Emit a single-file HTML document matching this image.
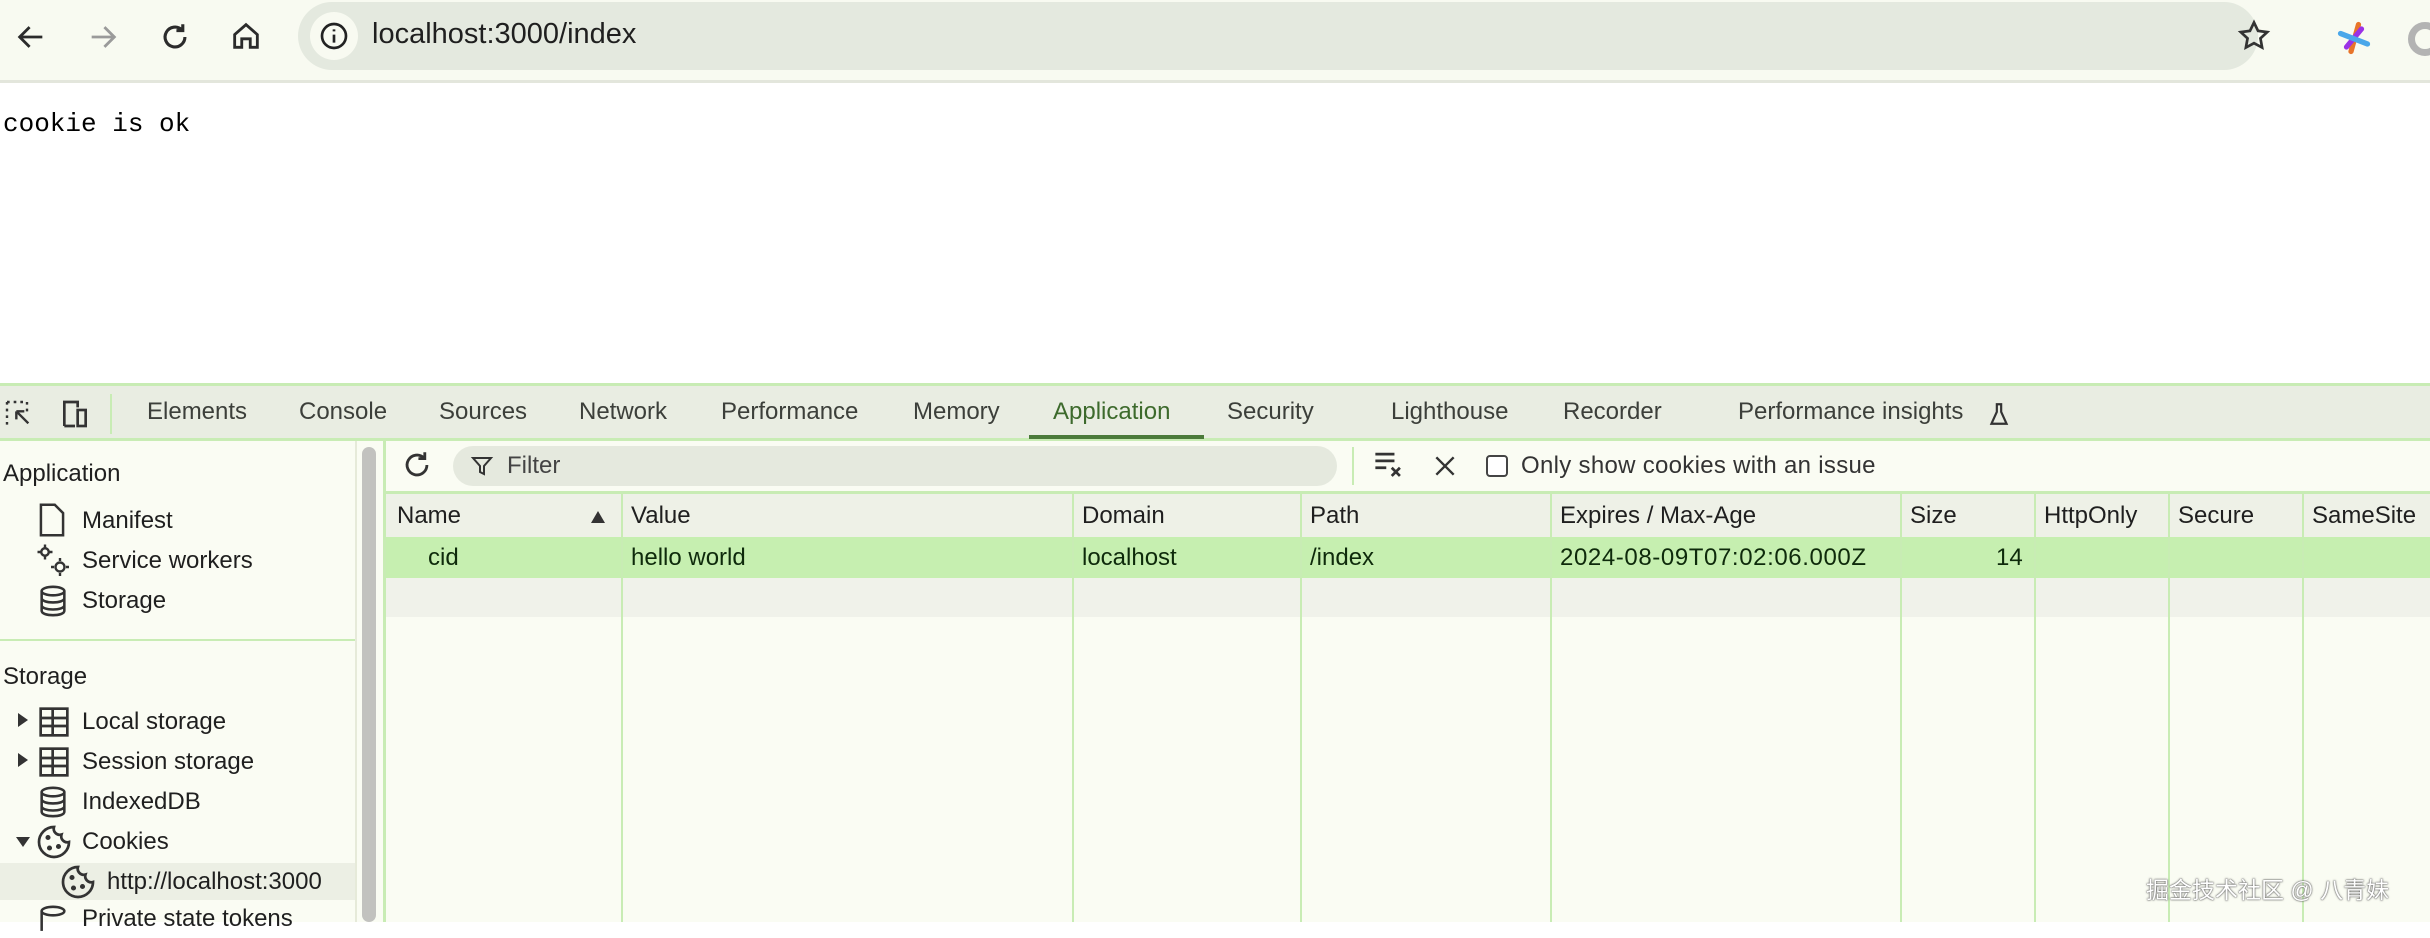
<!DOCTYPE html>
<html><head><meta charset="utf-8"><style>
*{margin:0;padding:0;box-sizing:border-box}
body{width:2430px;height:922px;overflow:hidden;background:#fff;font-family:"Liberation Sans","Noto Sans CJK SC",sans-serif;position:relative;color:#1f1f1f}
.a{position:absolute;white-space:nowrap}
.top{position:absolute;left:0;top:0;width:2430px;height:83px;background:#f8faf1;border-bottom:3px solid #e3e6dc}
.pill{position:absolute;left:298px;top:2px;width:1960px;height:68px;border-radius:34px;background:#e4e9df}
.tabs{position:absolute;left:0;top:383px;width:2430px;height:58px;background:#e9ede2;border-top:3px solid #c8ecb4;border-bottom:3px solid #c8ecb4}
.tab{position:absolute;top:12px;font-size:24px;color:#3c3f3a}
.dev{position:absolute;left:0;top:441px;width:2430px;height:481px;background:#fafcf3}
.side{font-size:24px;color:#1f1f1f}
.th{font-size:24px;color:#1f1f1f;top:502px}
.td{font-size:24px;color:#0e2a0b;top:544px}
.col{position:absolute;top:494px;width:2px;height:428px;background:#c8ecb4}
</style></head><body>
<div class="top">
 <svg class="a" style="left:14px;top:20px" width="34" height="34" viewBox="0 0 24 24" fill="none" stroke="#2b2b2b" stroke-width="2"><path d="M20 12H5M11 5l-7 7 7 7"/></svg>
 <svg class="a" style="left:86px;top:20px" width="34" height="34" viewBox="0 0 24 24" fill="none" stroke="#9a9a9a" stroke-width="2"><path d="M4 12h15M13 5l7 7-7 7"/></svg>
 <svg class="a" style="left:158px;top:20px" width="34" height="34" viewBox="0 0 24 24" fill="none" stroke="#2b2b2b" stroke-width="2.2"><path d="M19 12a7 7 0 1 1-2.1-5M17.5 3v4.5H13"/></svg>
 <svg class="a" style="left:229px;top:19px" width="34" height="34" viewBox="0 0 24 24" fill="none" stroke="#2b2b2b" stroke-width="2"><path d="M4 11l8-7 8 7v9h-5v-6H9v6H4z"/></svg>
 <div class="pill"></div>
 <div class="a" style="left:310px;top:12px;width:48px;height:48px;border-radius:24px;background:#f8faf1"></div>
 <svg class="a" style="left:318px;top:20px" width="32" height="32" viewBox="0 0 24 24" fill="none" stroke="#222" stroke-width="2"><circle cx="12" cy="12" r="9"/><path d="M12 11v6M12 7v1.5"/></svg>
 <div class="a" style="left:372px;top:18px;font-size:29px;color:#1f1f1f">localhost:3000/index</div>
 <svg class="a" style="left:2236px;top:18px" width="36" height="36" viewBox="0 0 24 24" fill="none" stroke="#333" stroke-width="1.8"><path d="M12 3l2.7 5.6 6.1.8-4.5 4.2 1.1 6.1L12 16.8l-5.4 2.9 1.1-6.1-4.5-4.2 6.1-.8z"/></svg>
 <svg class="a" style="left:2336px;top:20px" width="36" height="36" viewBox="0 0 24 24" stroke-width="3.5" stroke-linecap="round"><path d="M15 3L10 21" stroke="#e8742a"/><path d="M17 6L7 18" stroke="#9b32e6"/><path d="M3 9l18 7" stroke="#4aa7ea"/></svg>
 <div class="a" style="left:2408px;top:22px;width:34px;height:34px;border-radius:50%;border:7px solid #b3b3b3"></div>
</div>
<div class="a" style="left:3px;top:109px;font-family:'Liberation Mono',monospace;font-size:26px;color:#000">cookie is ok</div>

<div class="tabs">
 <svg class="a" style="left:3px;top:12px" width="32" height="32" viewBox="0 0 24 24" fill="none" stroke="#333" stroke-width="1.8"><path d="M3 3h2M8 3h2M13 3h2M3 3v2M3 8v2M3 13v2M3 18v2M18 3v2M18 8v2" stroke-dasharray="2 1.5"/><path d="M10 10l9 9M10 10v6M10 10h6"/></svg>
 <svg class="a" style="left:58px;top:12px" width="34" height="32" viewBox="0 0 24 24" fill="none" stroke="#333" stroke-width="2"><path d="M4 21V3h10v4M4 21h8"/><rect x="14" y="9" width="6" height="12"/></svg>
 <div class="a" style="left:110px;top:8px;width:2px;height:40px;background:#c8ecb4"></div>
 <div class="tab" style="left:147px">Elements</div>
 <div class="tab" style="left:299px">Console</div>
 <div class="tab" style="left:439px">Sources</div>
 <div class="tab" style="left:579px">Network</div>
 <div class="tab" style="left:721px">Performance</div>
 <div class="tab" style="left:913px">Memory</div>
 <div class="tab" style="left:1053px;color:#3d6a2c">Application</div>
 <div class="a" style="left:1029px;top:49px;width:175px;height:4px;background:#4b7a3a"></div>
 <div class="tab" style="left:1227px">Security</div>
 <div class="tab" style="left:1391px">Lighthouse</div>
 <div class="tab" style="left:1563px">Recorder</div>
 <div class="tab" style="left:1738px">Performance insights</div>
 <svg class="a" style="left:1986px;top:13px" width="26" height="30" viewBox="0 0 24 24" fill="none" stroke="#333" stroke-width="2"><path d="M9 3h6M10 3v7l-5 11h14l-5-11V3"/></svg>
</div>

<div class="dev">
 <div class="a" style="left:355px;top:0;width:2px;height:481px;background:#e6ead9"></div>
 <div class="a" style="left:362px;top:6px;width:14px;height:475px;border-radius:7px;background:#c2c2bf"></div>
 <div class="a" style="left:383px;top:0;width:3px;height:481px;background:#c8ecb4"></div>
</div>
<div class="a side" style="left:3px;top:460px">Application</div>
<svg class="a" style="left:38px;top:502px" width="28" height="36" viewBox="0 0 20 26" fill="none" stroke="#333" stroke-width="1.8"><path d="M2 2h10l6 6v16H2z"/></svg>
<div class="a side" style="left:82px;top:507px">Manifest</div>
<svg class="a" style="left:36px;top:542px" width="36" height="38" viewBox="0 0 24 24" fill="none" stroke="#333" stroke-width="1.6"><circle cx="6" cy="6" r="2.5"/><circle cx="16" cy="16" r="3"/><path d="M6 1v2M6 9v2M1 6h2M9 6h2M16 10v2M16 20v2M10 16h2M20 16h2"/></svg>
<div class="a side" style="left:82px;top:547px">Service workers</div>
<svg class="a" style="left:38px;top:584px" width="30" height="34" viewBox="0 0 20 24" fill="none" stroke="#333" stroke-width="1.8"><ellipse cx="10" cy="5" rx="8" ry="3"/><path d="M2 5v14c0 4 16 4 16 0V5M2 10c0 4 16 4 16 0M2 15c0 4 16 4 16 0"/></svg>
<div class="a side" style="left:82px;top:587px">Storage</div>
<div class="a" style="left:0;top:639px;width:355px;height:2px;background:#c8ecb4"></div>
<div class="a side" style="left:3px;top:663px">Storage</div>
<div class="a" style="left:18px;top:713px;border-left:10px solid #333;border-top:7px solid transparent;border-bottom:7px solid transparent"></div>
<svg class="a" style="left:38px;top:706px" width="32" height="32" viewBox="0 0 24 24" fill="none" stroke="#333" stroke-width="2"><rect x="2" y="2" width="20" height="20"/><path d="M2 9h20M2 15h20M11 2v20"/></svg>
<div class="a side" style="left:82px;top:708px">Local storage</div>
<div class="a" style="left:18px;top:753px;border-left:10px solid #333;border-top:7px solid transparent;border-bottom:7px solid transparent"></div>
<svg class="a" style="left:38px;top:746px" width="32" height="32" viewBox="0 0 24 24" fill="none" stroke="#333" stroke-width="2"><rect x="2" y="2" width="20" height="20"/><path d="M2 9h20M2 15h20M11 2v20"/></svg>
<div class="a side" style="left:82px;top:748px">Session storage</div>
<svg class="a" style="left:38px;top:785px" width="30" height="34" viewBox="0 0 20 24" fill="none" stroke="#333" stroke-width="1.8"><ellipse cx="10" cy="5" rx="8" ry="3"/><path d="M2 5v14c0 4 16 4 16 0V5M2 10c0 4 16 4 16 0M2 15c0 4 16 4 16 0"/></svg>
<div class="a side" style="left:82px;top:788px">IndexedDB</div>
<div class="a" style="left:16px;top:837px;border-top:10px solid #333;border-left:7px solid transparent;border-right:7px solid transparent"></div>
<svg class="a" style="left:36px;top:824px" width="36" height="36" viewBox="0 0 24 24" fill="none" stroke="#333" stroke-width="1.8"><path d="M12 2a10 10 0 1 0 10 10 4 4 0 0 1-5-5 4 4 0 0 1-5-5z"/><circle cx="8" cy="9" r=".8" fill="#333"/><circle cx="15" cy="15" r=".8" fill="#333"/><circle cx="9" cy="16" r=".8" fill="#333"/></svg>
<div class="a side" style="left:82px;top:828px">Cookies</div>
<div class="a" style="left:0;top:863px;width:355px;height:37px;background:#ecefe4"></div>
<svg class="a" style="left:60px;top:864px" width="36" height="36" viewBox="0 0 24 24" fill="none" stroke="#333" stroke-width="1.8"><path d="M12 2a10 10 0 1 0 10 10 4 4 0 0 1-5-5 4 4 0 0 1-5-5z"/><circle cx="8" cy="9" r=".8" fill="#333"/><circle cx="15" cy="15" r=".8" fill="#333"/><circle cx="9" cy="16" r=".8" fill="#333"/></svg>
<div class="a side" style="left:107px;top:868px">http://localhost:3000</div>
<svg class="a" style="left:38px;top:904px" width="30" height="34" viewBox="0 0 20 24" fill="none" stroke="#333" stroke-width="1.8"><ellipse cx="10" cy="5" rx="8" ry="3"/><path d="M2 5v14"/></svg>
<div class="a side" style="left:82px;top:905px">Private state tokens</div>

<svg class="a" style="left:400px;top:448px" width="34" height="34" viewBox="0 0 24 24" fill="none" stroke="#333" stroke-width="2"><path d="M19 12a7 7 0 1 1-2.1-5M17.5 3v4.5H13"/></svg>
<div class="a" style="left:453px;top:446px;width:884px;height:40px;border-radius:20px;background:#e5e9de"></div>
<svg class="a" style="left:470px;top:454px" width="24" height="24" viewBox="0 0 24 24" fill="none" stroke="#333" stroke-width="2"><path d="M3 4h18l-7 8v8l-4-2v-6z"/></svg>
<div class="a" style="left:507px;top:452px;font-size:24px;color:#444">Filter</div>
<div class="a" style="left:1352px;top:447px;width:2px;height:38px;background:#c8ecb4"></div>
<svg class="a" style="left:1372px;top:450px" width="34" height="30" viewBox="0 0 24 22" fill="none" stroke="#333" stroke-width="2"><path d="M2 3h14M2 8h14M2 13h8M14 13l6 6M20 13l-6 6"/></svg>
<svg class="a" style="left:1432px;top:453px" width="26" height="26" viewBox="0 0 24 24" fill="none" stroke="#333" stroke-width="2.2"><path d="M4 4l16 16M20 4L4 20"/></svg>
<div class="a" style="left:1486px;top:455px;width:22px;height:22px;border:2px solid #444;border-radius:4px;background:#fff"></div>
<div class="a" style="left:1521px;top:452px;font-size:24px;color:#333;letter-spacing:0.3px">Only show cookies with an issue</div>

<div class="a" style="left:386px;top:491px;width:2044px;height:3px;background:#c8ecb4"></div>
<div class="a" style="left:386px;top:494px;width:2044px;height:43px;background:#eef1e7"></div>
<div class="a" style="left:386px;top:537px;width:2044px;height:41px;background:#c6efb0"></div>
<div class="a" style="left:386px;top:578px;width:2044px;height:39px;background:#f0f2ea"></div>
<div class="col" style="left:621px"></div><div class="col" style="left:1072px"></div><div class="col" style="left:1300px"></div><div class="col" style="left:1550px"></div><div class="col" style="left:1900px"></div><div class="col" style="left:2034px"></div><div class="col" style="left:2168px"></div><div class="col" style="left:2302px"></div>
<div class="a th" style="left:397px">Name</div>
<div class="a" style="left:591px;top:511px;border-bottom:12px solid #333;border-left:7px solid transparent;border-right:7px solid transparent"></div>
<div class="a th" style="left:631px">Value</div>
<div class="a th" style="left:1082px">Domain</div>
<div class="a th" style="left:1310px">Path</div>
<div class="a th" style="left:1560px">Expires / Max-Age</div>
<div class="a th" style="left:1910px">Size</div>
<div class="a th" style="left:2044px">HttpOnly</div>
<div class="a th" style="left:2178px">Secure</div>
<div class="a th" style="left:2312px">SameSite</div>
<div class="a td" style="left:428px">cid</div>
<div class="a td" style="left:631px">hello world</div>
<div class="a td" style="left:1082px">localhost</div>
<div class="a td" style="left:1310px">/index</div>
<div class="a td" style="left:1560px;letter-spacing:0.6px">2024-08-09T07:02:06.000Z</div>
<div class="a td" style="left:1996px">14</div>
<div class="a" style="left:2146px;top:871px;font-size:23px;color:#fff;text-shadow:0 0 2px #555,0 0 1px #333">掘金技术社区 @ 八青妹</div>
</body></html>
